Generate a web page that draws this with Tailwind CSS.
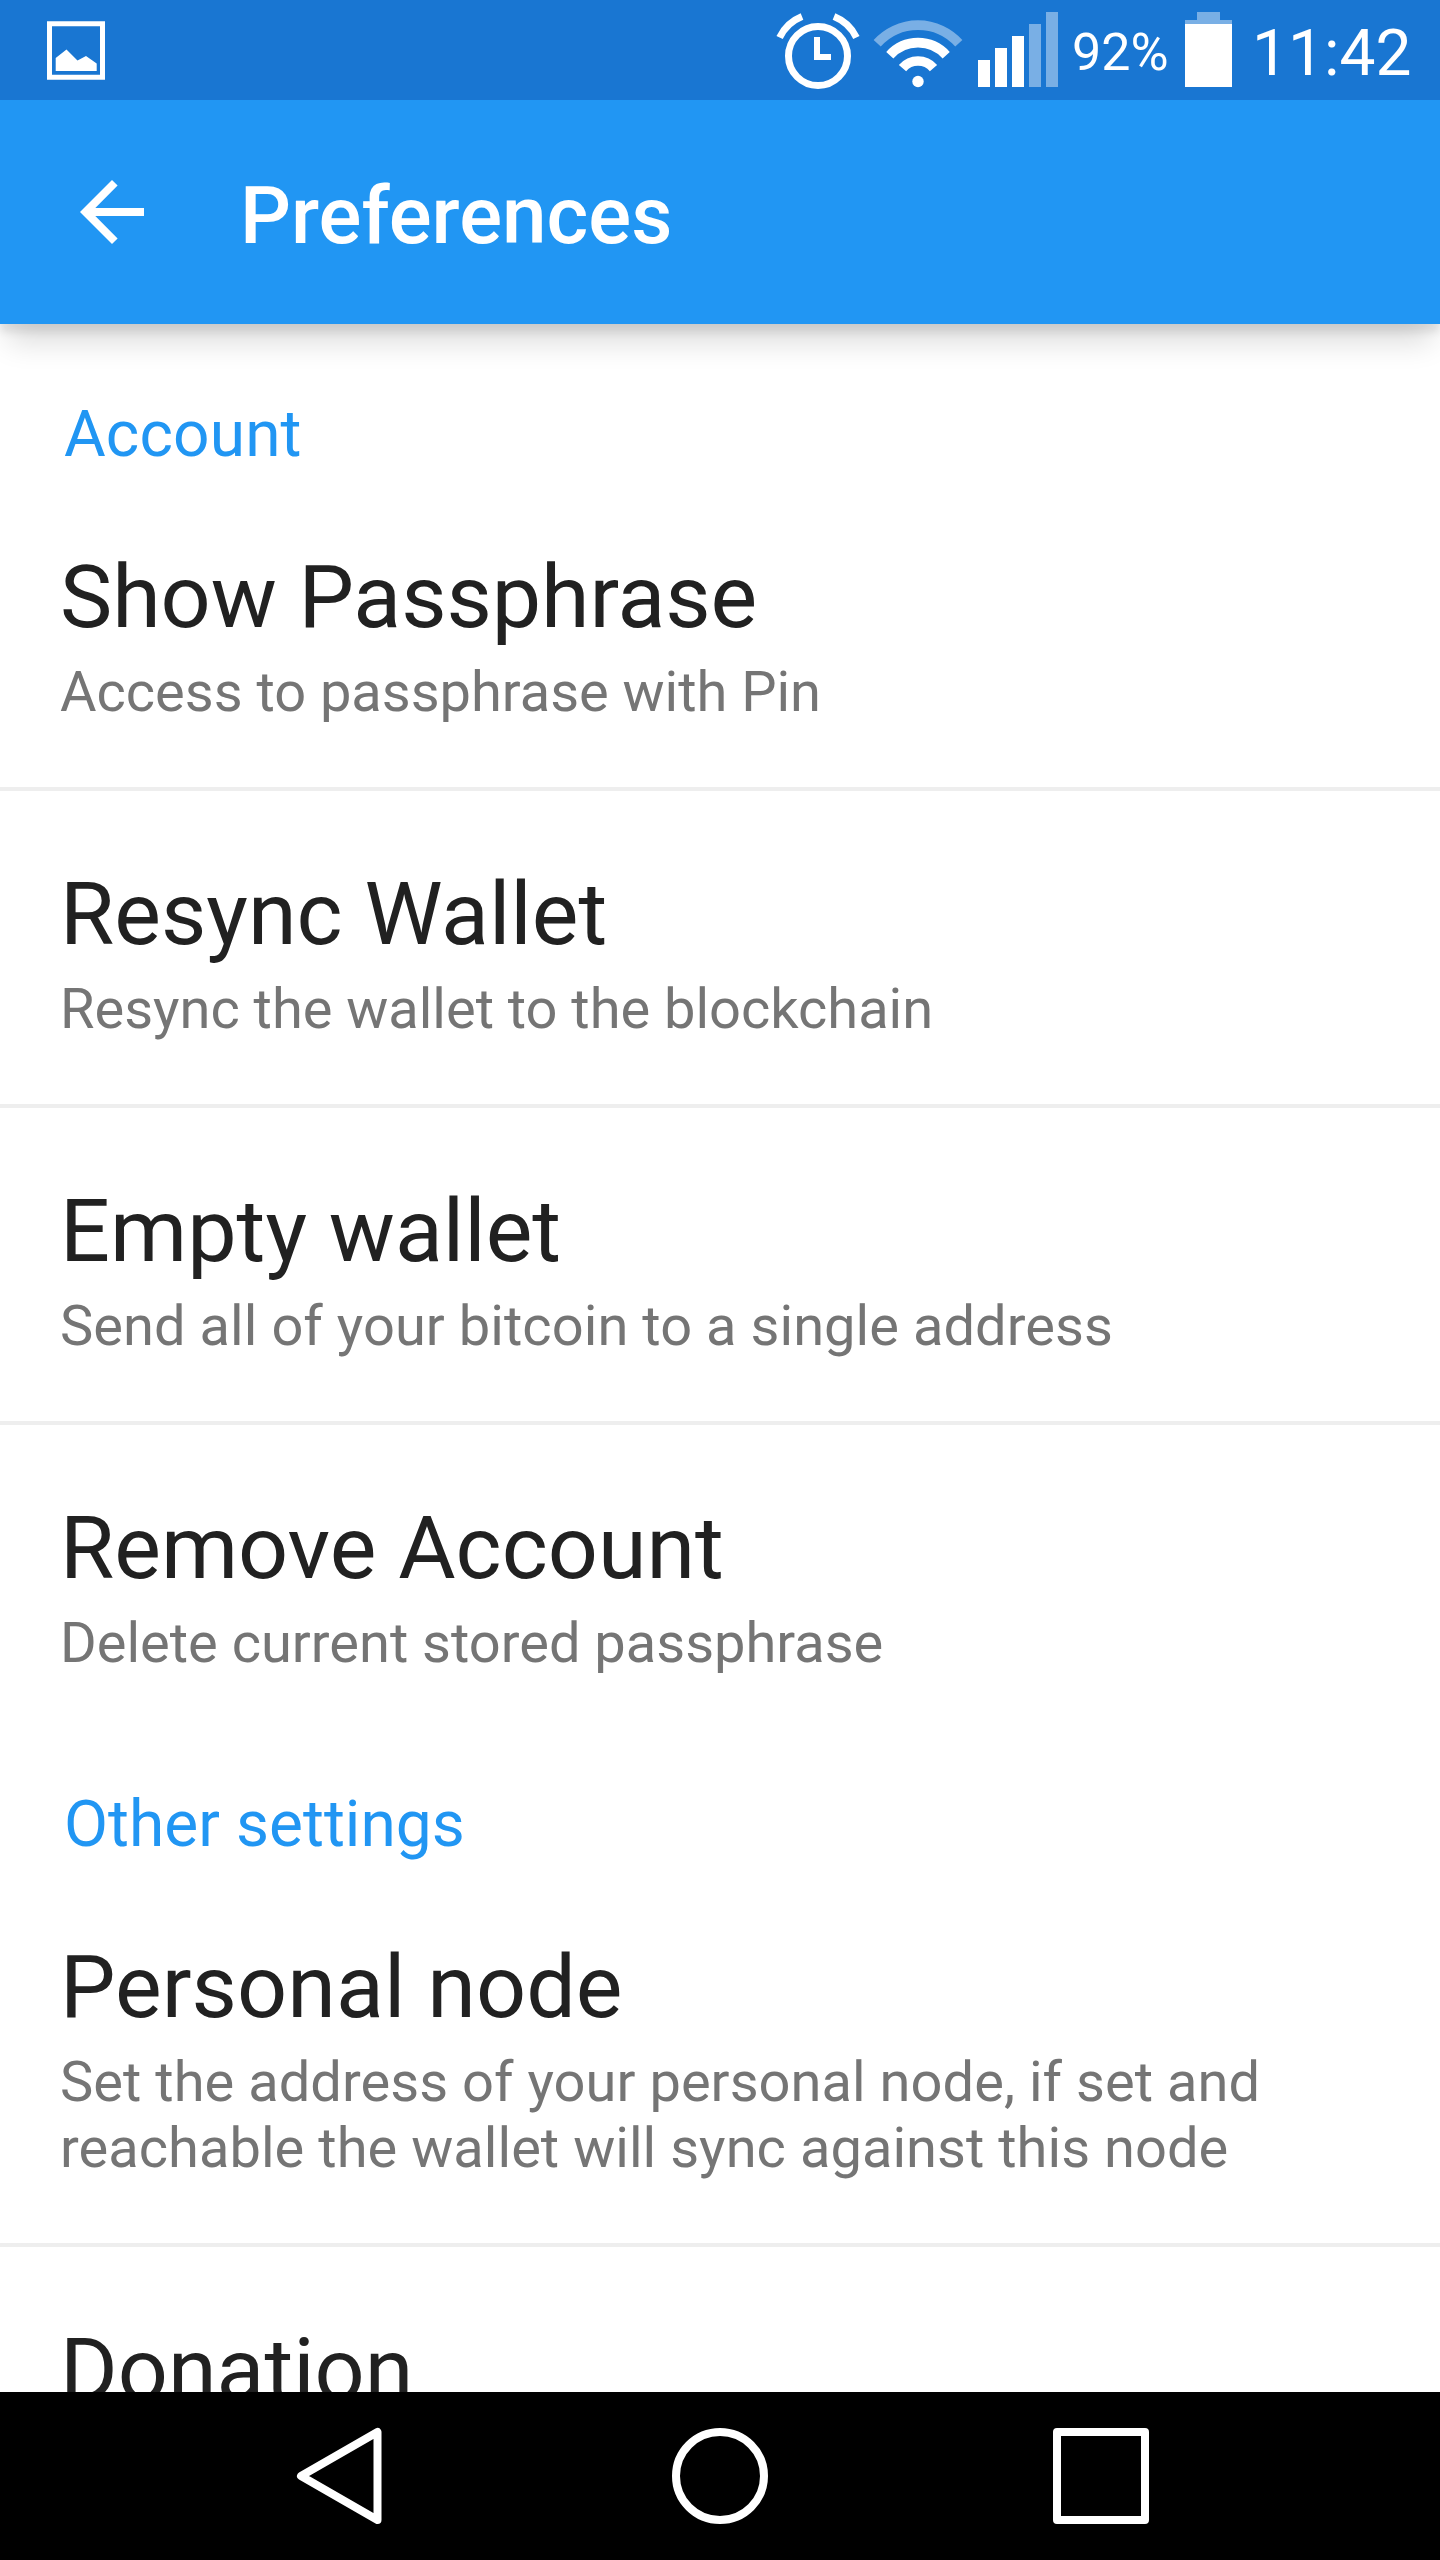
<!DOCTYPE html>
<html lang="en">
<head>
<meta charset="utf-8">
<title>Preferences</title>
<script src="https://cdn.jsdelivr.net/npm/@tailwindcss/browser@4"></script>
</head>
<body class="bg-white font-['Roboto',sans-serif]">
<div class="w-[1440px] h-[2560px] overflow-hidden flex flex-col bg-white">

  <!-- Status bar -->
  <div class="h-[100px] shrink-0 bg-[#1976d2] flex justify-between text-white pl-10 pr-7">
    <svg class="w-20 h-[100px]" viewBox="40 0 80 100" fill="none">
      <rect x="49.5" y="23.75" width="53" height="53.5" stroke="#fff" stroke-width="5"/>
      <path fill="#fff" d="M55.7 58L66.5 49.5 77.5 60.5 86 56 96.7 63.5V71H55.7z"/>
    </svg>
    <div class="flex items-start">
      <svg class="w-[96px] h-[100px]" viewBox="770 0 96 100" fill="none" stroke="#fff" stroke-width="7">
        <circle cx="818" cy="56" r="29.5"/>
        <path d="M779.6 37.5A42.5 42.5 0 0 1 802 16.6M834 16.6A42.5 42.5 0 0 1 856.4 37.5"/>
        <path stroke-width="6" d="M817 37V57H831"/>
      </svg>
      <svg class="w-[104px] h-[100px]" viewBox="866 0 104 100" fill="none" stroke="#fff" stroke-width="9.6">
        <path stroke-opacity=".42" d="M877.2 43.2A55 55 0 0 1 958.8 43.2"/>
        <path d="M889.8 55.2A38 38 0 0 1 946.2 55.2"/>
        <path d="M902.5 68.1A20.5 20.5 0 0 1 933.5 68.1"/>
        <circle cx="918" cy="81.5" r="5.7" fill="#fff" stroke="none"/>
      </svg>
      <svg class="w-[102px] h-[100px]" viewBox="970 0 102 100" fill="#fff">
        <path d="M978 60h12v27h-12zM995 48h12v39h-12zM1012 36h12v51h-12z"/>
        <path fill-opacity=".42" d="M1029 24h12v63h-12zM1046 12h12v75h-12z"/>
      </svg>
      <span class="w-[99px] mt-[22px] text-[52px] leading-[61px]">92%</span>
      <svg class="w-[81px] h-[100px]" viewBox="1171 0 81 100" fill="#fff">
        <path fill-opacity=".42" d="M1197 12h23v8h12v4h-47v-4h12z"/>
        <path d="M1185 24h47v63h-47z"/>
      </svg>
      <span class="w-40 mt-4 text-[64px] leading-[75px]">11:42</span>
    </div>
  </div>

  <!-- App bar -->
  <header class="h-[224px] shrink-0 bg-[#2196f3] flex text-white z-10 shadow-[0_8px_8px_rgba(0,0,0,0.09),0_26px_28px_-8px_rgba(0,0,0,0.14)]">
    <svg class="w-60 h-[224px]" viewBox="0 100 240 224" fill="#fff">
      <path d="M144 208H95.3L117.6 185.6 112 180 80 212l32 32 5.6-5.6L95.3 216H144z"/>
    </svg>
    <h1 class="mt-[69px] text-[80px] leading-[94px] font-medium">Preferences</h1>
  </header>

  <main class="flex-1 min-h-0 overflow-hidden text-[#212121]">
    <h2 class="pt-[73px] pl-16 text-[64px] leading-[76px] tracking-[0.12px] text-[#2196f3]">Account</h2>
    <section class="pt-[72px] px-[60px] pb-[62px] border-b-4 border-[#eee]">
      <h3 class="text-[88px] leading-[104px] tracking-[-0.09px]">Show Passphrase</h3>
      <p class="mt-2.5 text-[56px] leading-[66px] tracking-[-0.02px] text-[#757575]">Access to passphrase with Pin</p>
    </section>
    <section class="pt-[71px] px-[60px] pb-[62px] border-b-4 border-[#eee]">
      <h3 class="text-[88px] leading-[104px]">Resync Wallet</h3>
      <p class="mt-2.5 text-[56px] leading-[66px] tracking-[-0.02px] text-[#757575]">Resync the wallet to the blockchain</p>
    </section>
    <section class="pt-[71px] px-[60px] pb-[62px] border-b-4 border-[#eee]">
      <h3 class="text-[88px] leading-[104px]">Empty wallet</h3>
      <p class="mt-2.5 text-[56px] leading-[66px] tracking-[0.05px] text-[#757575]">Send all of your bitcoin to a single address</p>
    </section>
    <section class="pt-[71px] px-[60px]">
      <h3 class="text-[88px] leading-[104px]">Remove Account</h3>
      <p class="mt-2.5 text-[56px] leading-[66px] text-[#757575]">Delete current stored passphrase</p>
    </section>
    <h2 class="pt-[111px] pl-16 text-[64px] leading-[76px] tracking-[0.03px] text-[#2196f3]">Other settings</h2>
    <section class="pt-[72px] px-[60px] pb-[62px] border-b-4 border-[#eee]">
      <h3 class="text-[88px] leading-[104px] tracking-[0.06px]">Personal node</h3>
      <p class="mt-2.5 text-[56px] leading-[66px] tracking-[0.04px] text-[#757575]">Set the address of your personal node, if set and<br>reachable the wallet will sync against this node</p>
    </section>
    <section class="pt-[71px] px-[60px]">
      <h3 class="text-[88px] leading-[104px]">Donation</h3>
    </section>
  </main>

  <!-- Navigation bar -->
  <nav class="h-[168px] shrink-0 bg-black">
    <svg class="w-[1440px] h-[168px]" viewBox="0 2392 1440 168" fill="none" stroke="#fff" stroke-width="8" stroke-linejoin="round">
      <path d="M301 2476L377.5 2432V2520z"/>
      <circle cx="720" cy="2476" r="44"/>
      <rect x="1057" y="2432" width="88" height="88"/>
    </svg>
  </nav>
</div>
</body>
</html>
